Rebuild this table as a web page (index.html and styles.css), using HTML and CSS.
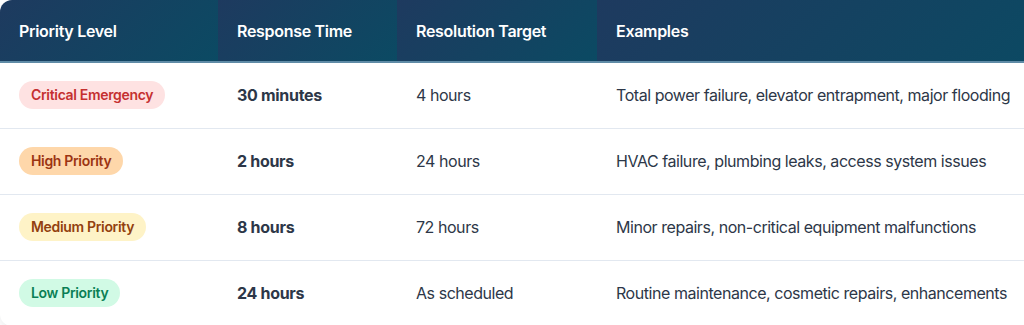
FILE: index.html
```html
<!DOCTYPE html>
<html lang="en">
<head>
<meta charset="utf-8">
<title>Priority Levels</title>
<link rel="stylesheet" href="styles.css">
</head>
<body>
<div class="table-wrap">
  <table class="priority-table">
    <colgroup>
      <col class="c1"><col class="c2"><col class="c3"><col class="c4">
    </colgroup>
    <thead>
      <tr>
        <th>Priority Level</th>
        <th>Response Time</th>
        <th>Resolution Target</th>
        <th>Examples</th>
      </tr>
    </thead>
    <tbody>
      <tr>
        <td><span class="badge critical">Critical Emergency</span></td>
        <td class="strong">30 minutes</td>
        <td>4 hours</td>
        <td>Total power failure, elevator entrapment, major flooding</td>
      </tr>
      <tr>
        <td><span class="badge high">High Priority</span></td>
        <td class="strong">2 hours</td>
        <td>24 hours</td>
        <td>HVAC failure, plumbing leaks, access system issues</td>
      </tr>
      <tr>
        <td><span class="badge medium">Medium Priority</span></td>
        <td class="strong">8 hours</td>
        <td>72 hours</td>
        <td>Minor repairs, non-critical equipment malfunctions</td>
      </tr>
      <tr>
        <td><span class="badge low">Low Priority</span></td>
        <td class="strong">24 hours</td>
        <td>As scheduled</td>
        <td>Routine maintenance, cosmetic repairs, enhancements</td>
      </tr>
    </tbody>
  </table>
</div>
</body>
</html>
```

FILE: styles.css
```css
html, body {
  margin: 0;
  padding: 0;
  overflow: hidden;
  background: #ffffff;
}

body {
  font-family: Inter, "Noto Sans", "Liberation Sans", sans-serif;
  color: #2d3748;
}

.table-wrap {
  width: 1060px;
  border-radius: 12px;
  overflow: hidden;
  background: #ffffff;
  box-shadow: 0 4px 10px rgba(15, 23, 42, 0.08);
}

.priority-table {
  width: 100%;
  border-collapse: collapse;
  table-layout: fixed;
}

.c1 { width: 218px; }
.c2 { width: 179px; }
.c3 { width: 200px; }
.c4 { width: auto; }

.priority-table th {
  height: 62px;
  padding: 0 19px;
  text-align: left;
  font-size: 16px;
  font-weight: 600;
  letter-spacing: -0.3px;
  color: #ffffff;
  background: linear-gradient(135deg, #1e3a5f 0%, #0b4a63 100%);
  border-bottom: 2px solid #5f8ba6;
  box-sizing: border-box;
}

.priority-table td {
  height: 66px;
  padding: 0 19px;
  font-size: 16px;
  line-height: 24px;
  letter-spacing: -0.45px;
  color: #2d3748;
  border-bottom: 1px solid #e2e8f0;
  vertical-align: middle;
  box-sizing: border-box;
  white-space: nowrap;
}

.priority-table tbody tr:last-child td {
  border-bottom: none;
}

.priority-table td.strong {
  font-weight: 700;
  letter-spacing: -0.3px;
}

.badge {
  display: inline-block;
  padding: 4px 12px;
  border-radius: 999px;
  font-size: 14px;
  line-height: 20px;
  font-weight: 600;
  letter-spacing: -0.33px;
}

.critical { background: #fee2e2; color: #c53030; }
.high { background: #fed7aa; color: #9c3412; }
.medium { background: #fef3c7; color: #92400e; }
.low { background: #d1fae5; color: #0a7f55; }
```
